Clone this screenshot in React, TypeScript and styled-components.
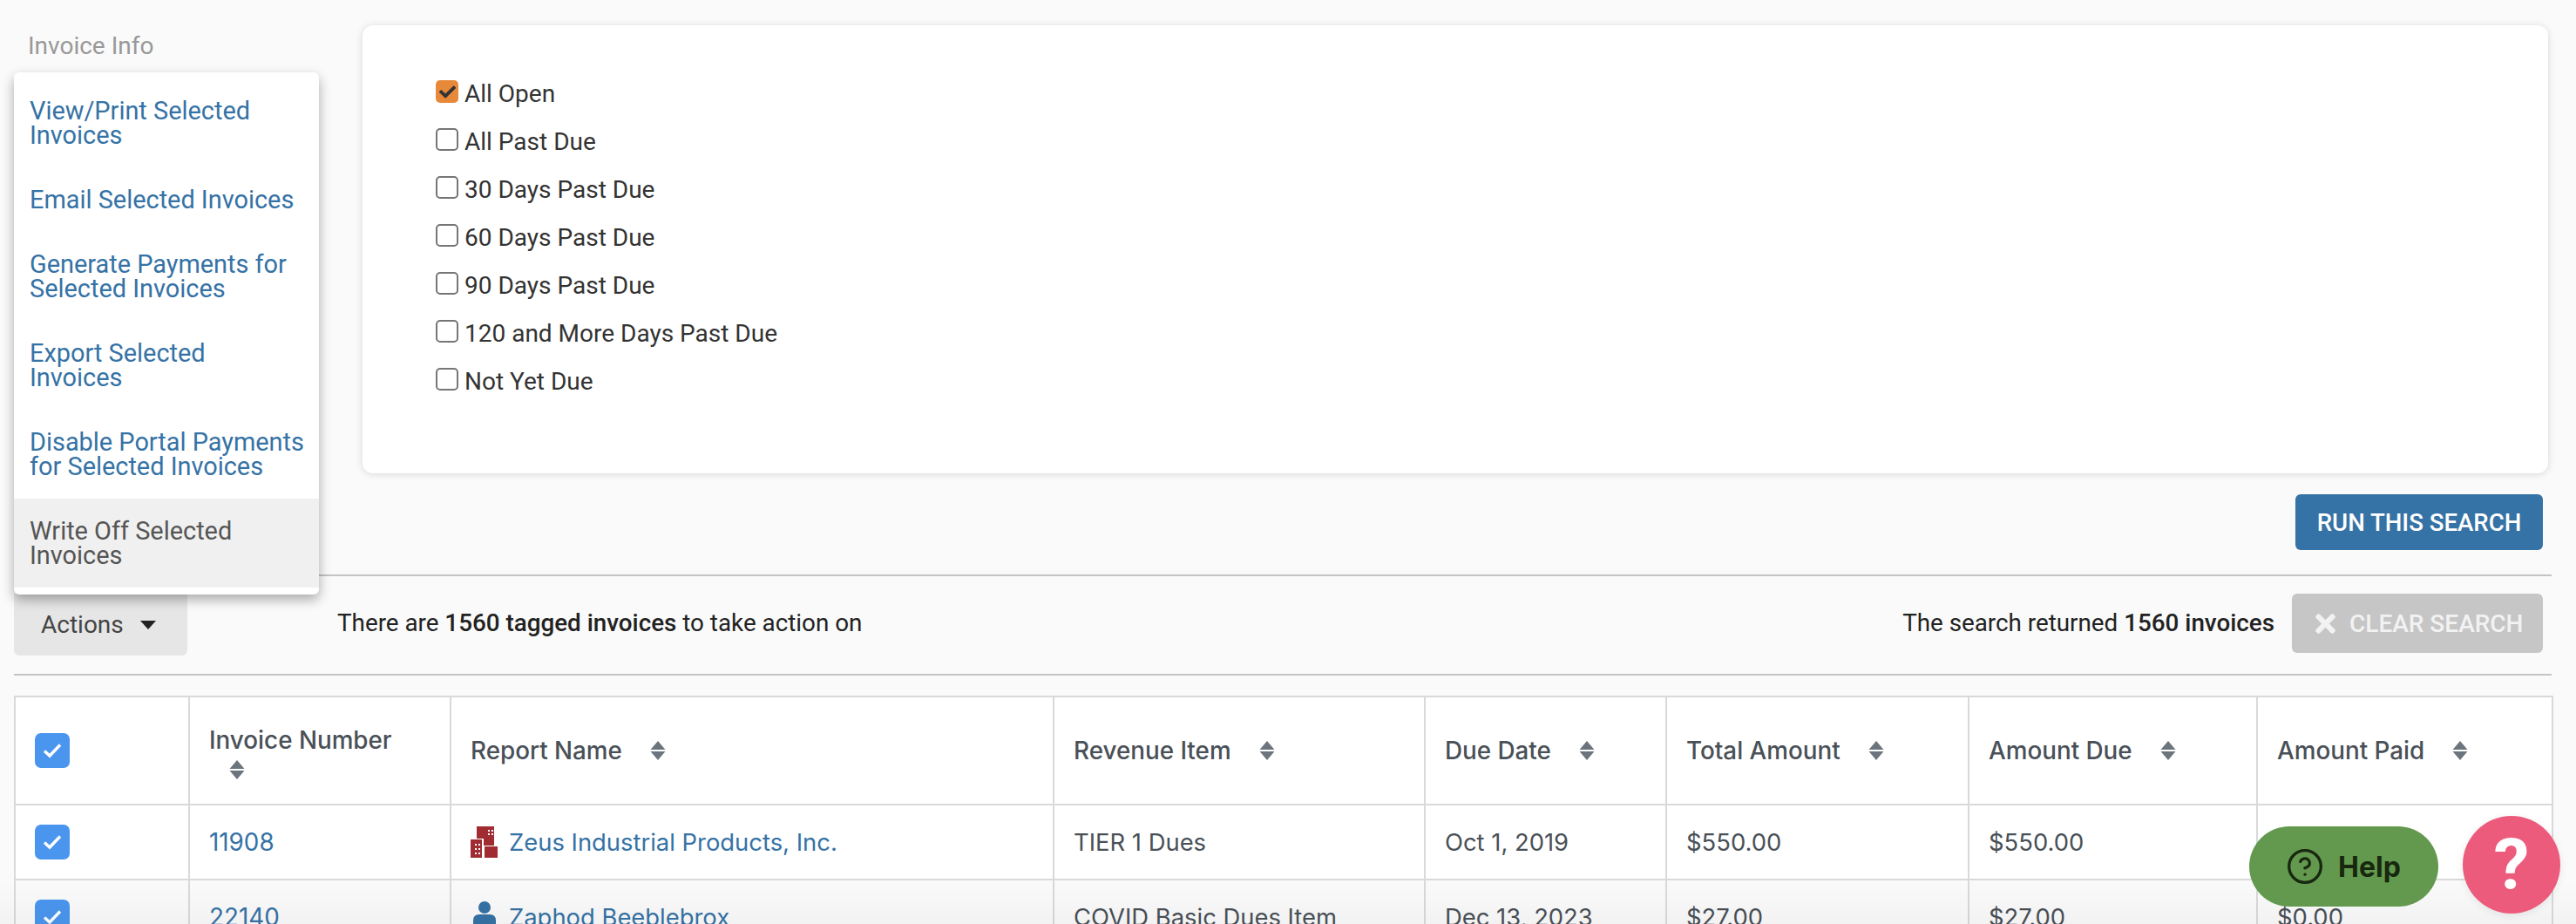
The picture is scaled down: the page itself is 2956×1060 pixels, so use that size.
import React from 'react';
import styled, { createGlobalStyle } from 'styled-components';
import { FaCheck, FaTimes } from 'react-icons/fa';
import { CircleHelp } from 'lucide-react';

const GlobalStyle = createGlobalStyle`
  html, body {
    margin: 0;
    padding: 0;
    background: #fafafa;
  }
  body {
    font-family: Roboto, "Liberation Sans", sans-serif;
    font-size: 28px;
    color: #333;
  }
  * {
    box-sizing: border-box;
  }
`;

const Page = styled.div`
  height: 1060px;
  overflow: hidden;
  padding: 29px 28px 0 16px;
  position: relative;

  &::after {
    content: '';
    position: absolute;
    left: 0;
    right: 0;
    bottom: 0;
    height: 50px;
    z-index: 4;
    pointer-events: none;
    background: linear-gradient(rgba(0, 0, 0, 0), rgba(0, 0, 0, 0.03));
  }
`;

const TopRow = styled.div`
  display: flex;
  align-items: flex-start;
`;

const Sidebar = styled.div`
  width: 400px;
  flex: none;
  position: relative;
`;

const SectionLabel = styled.div`
  padding: 8px 0 0 16px;
  color: #999;
  line-height: 32px;
`;

const Menu = styled.ul`
  position: absolute;
  top: 54px;
  left: 0;
  z-index: 5;
  width: 350px;
  margin: 0;
  padding: 7px 0 8px;
  list-style: none;
  background: #fff;
  border-radius: 6px;
  box-shadow: 0 6px 14px rgba(0, 0, 0, 0.32);
`;

const MenuItem = styled.li<{ $active?: boolean }>`
  padding: 23px 0 23px 18px;
  font-size: 28.9px;
  line-height: 28px;
  color: ${(p) => (p.$active ? '#555' : '#3572a5')};
  background: ${(p) => (p.$active ? '#f0f0f0' : 'transparent')};
`;

const FilterPanel = styled.div`
  flex: 1;
  height: 514px;
  margin-right: 4px;
  padding: 63px 84px;
  background: #fff;
  border-radius: 12px;
  box-shadow: 0 1px 8px rgba(0, 0, 0, 0.14);
`;

const FilterRow = styled.label`
  display: flex;
  align-items: flex-start;
  gap: 7px;
  height: 55px;
  line-height: 32px;
  color: #333;
`;

const FilterBox = styled.span<{ $checked?: boolean }>`
  width: 26px;
  height: 26px;
  flex: none;
  display: flex;
  align-items: center;
  justify-content: center;
  border-radius: 5px;
  color: #333;
  background: ${(p) => (p.$checked ? '#e8893a' : '#fff')};
  border: ${(p) => (p.$checked ? 'none' : '2px solid #767676')};
`;

const ButtonRow = styled.div`
  display: flex;
  justify-content: flex-end;
  padding: 24px 10px 28px 0;
`;

const RunButton = styled.button`
  width: 284px;
  height: 64px;
  border: none;
  border-radius: 6px;
  background: #3572a5;
  color: #fff;
  font: 500 27.6px Roboto, sans-serif;
`;

const ActionBar = styled.div`
  display: flex;
  align-items: flex-start;
  height: 116px;
  border-top: 2px solid #c4c4c4;
  border-bottom: 2px solid #c4c4c4;
`;

const ActionsButton = styled.div`
  width: 199px;
  height: 71px;
  margin-top: 20px;
  display: flex;
  align-items: center;
  gap: 19px;
  padding-left: 31px;
  border-radius: 0 0 6px 6px;
  background: #e6e6e6;
  color: #444;
`;

const Caret = styled.span`
  width: 0;
  height: 0;
  border-left: 9px solid transparent;
  border-right: 9px solid transparent;
  border-top: 10px solid #222;
`;

const Summary = styled.div`
  margin-top: 38px;
  line-height: 32px;
  font-size: 27.8px;
  color: #222;
  b {
    font-weight: 500;
  }
`;

const TaggedSummary = styled(Summary)`
  margin-left: 172px;
`;

const ReturnedSummary = styled(Summary)`
  margin-left: auto;
`;

const ClearButton = styled.div`
  width: 288px;
  height: 68px;
  margin: 20px 10px 0 20px;
  display: flex;
  align-items: center;
  gap: 11px;
  padding-left: 22px;
  border-radius: 6px;
  background: #c6c6c6;
  color: #f2f2f2;
  font-weight: 500;
`;

const DataTable = styled.table`
  width: 100%;
  margin-top: 23px;
  table-layout: fixed;
  border-collapse: collapse;
  font-family: Inter, Roboto, sans-serif;
  font-size: 27.4px;
  background: #fff;
`;

const HeadCell = styled.th`
  height: 124px;
  padding: 0 22px;
  text-align: left;
  font-size: 27.8px;
  font-weight: 500;
  line-height: 40px;
  color: #495057;
  border: 2px solid #d9d9d9;
`;

const Cell = styled.td`
  height: 86px;
  padding: 0 22px;
  color: #495057;
  border: 2px solid #d9d9d9;
`;

const StripedRow = styled.tr`
  background: #fafafa;
`;

const NumberLink = styled.span`
  font-size: 27.8px;
  color: #3572a5;
`;

const HeaderLabel = styled.span`
  display: inline-flex;
  align-items: center;
  flex-wrap: wrap;
  column-gap: 32px;
`;

const ReportCell = styled.span`
  display: flex;
  align-items: center;
  gap: 13px;
  color: #3572a5;
`;

const TickBox = styled.span`
  width: 40px;
  height: 40px;
  display: flex;
  align-items: center;
  justify-content: center;
  border-radius: 7px;
  background: #4a96ee;
`;

const SortGlyph = styled.svg`
  width: 18px;
  height: 22px;
  fill: #6c757d;
  flex: none;
`;

const WrappedSort = styled.span`
  display: block;
  padding: 3px 0 0 23px;
  line-height: 0;
`;

const HelpPill = styled.div`
  position: fixed;
  left: 2581px;
  top: 948px;
  width: 217px;
  height: 92px;
  z-index: 6;
  display: flex;
  align-items: center;
  gap: 16px;
  padding-left: 42px;
  border-radius: 46px;
  background: #63994e;
  color: #17280f;
  font: 700 32px Inter, sans-serif;
`;

const HelpBubble = styled.div`
  position: fixed;
  left: 2826px;
  top: 936px;
  width: 112px;
  height: 112px;
  z-index: 6;
  display: flex;
  align-items: center;
  justify-content: center;
  border-radius: 50%;
  background: #ec5a7c;
  box-shadow: 0 2px 10px rgba(0, 0, 0, 0.08);
  color: #fff;
  font: 700 82px Roboto, sans-serif;
`;

const menuItems = [
  <>View/Print Selected Invoices</>,
  <>Email Selected Invoices</>,
  <>Generate Payments for Selected Invoices</>,
  <>
    Export Selected
    <br />
    Invoices
  </>,
  <>Disable Portal Payments for Selected Invoices</>,
];

const filters = [
  'All Open',
  'All Past Due',
  '30 Days Past Due',
  '60 Days Past Due',
  '90 Days Past Due',
  '120 and More Days Past Due',
  'Not Yet Due',
];

const columns = [
  { title: '', width: 200 },
  { title: 'Invoice Number', width: 300 },
  { title: 'Report Name', width: 692 },
  { title: 'Revenue Item', width: 426 },
  { title: 'Due Date', width: 277 },
  { title: 'Total Amount', width: 347 },
  { title: 'Amount Due', width: 331 },
  { title: 'Amount Paid', width: 339 },
];

function SortIcon() {
  return (
    <SortGlyph viewBox="0 0 18 22">
      <path d="M9 0 L17.5 10 H0.5 Z" />
      <path d="M0.5 12 H17.5 L9 22 Z" />
    </SortGlyph>
  );
}

function Tick() {
  return (
    <svg width="22" height="18" viewBox="0 0 22 18" fill="none">
      <path d="M2 9.5 L8 15 L20 2.5" stroke="#fff" strokeWidth="3.4" />
    </svg>
  );
}

function BuildingIcon() {
  return (
    <svg width="31" height="36" viewBox="0 0 31 36" style={{ flex: 'none' }}>
      <path fill="#a02c32" d="M7 0 H27 V22 H15 V14 H7 Z" />
      <path fill="#a02c32" d="M0 15 H13 V36 H0 Z" />
      <path fill="#a02c32" d="M16 23 H31 V36 H16 Z" />
      <path fill="#fff" d="M20 4 h2 v2 h-2 Z M24 4 h2 v2 h-2 Z M20 8 h2 v2 h-2 Z M24 8 h2 v2 h-2 Z" />
      <path fill="#fff" d="M5 20 h2 v2 h-2 Z M9 20 h2 v2 h-2 Z M5 25 h2 v2 h-2 Z M9 25 h2 v2 h-2 Z M5 30 h2 v2 h-2 Z M9 30 h2 v2 h-2 Z" />
    </svg>
  );
}

function PersonIcon() {
  return (
    <svg width="31" height="36" viewBox="0 0 31 36" style={{ flex: 'none' }}>
      <circle cx="16" cy="7" r="7" fill="#3572a5" />
      <path fill="#3572a5" d="M3 36 L3 22 Q3 15 10 15 H22 Q29 15 29 22 L29 36 Z" />
    </svg>
  );
}

export default function App() {
  return (
    <Page>
      <GlobalStyle />
      <TopRow>
        <Sidebar>
          <SectionLabel>Invoice Info</SectionLabel>
          <Menu>
            {menuItems.map((item, i) => (
              <MenuItem key={i}>{item}</MenuItem>
            ))}
            <MenuItem $active>Write Off Selected Invoices</MenuItem>
          </Menu>
        </Sidebar>
        <FilterPanel>
          {filters.map((filter, i) => (
            <FilterRow key={filter}>
              <FilterBox $checked={i === 0}>{i === 0 && <FaCheck size={19} />}</FilterBox>
              {filter}
            </FilterRow>
          ))}
        </FilterPanel>
      </TopRow>
      <ButtonRow>
        <RunButton>RUN THIS SEARCH</RunButton>
      </ButtonRow>
      <ActionBar>
        <ActionsButton>
          Actions
          <Caret />
        </ActionsButton>
        <TaggedSummary>
          There are <b>1560 tagged invoices</b> to take action on
        </TaggedSummary>
        <ReturnedSummary>
          The search returned <b>1560 invoices</b>
        </ReturnedSummary>
        <ClearButton>
          <FaTimes size={33} />
          CLEAR SEARCH
        </ClearButton>
      </ActionBar>
      <DataTable>
        <colgroup>
          {columns.map((col) => (
            <col key={col.title} style={{ width: col.width }} />
          ))}
        </colgroup>
        <thead>
          <tr>
            <HeadCell>
              <TickBox>
                <Tick />
              </TickBox>
            </HeadCell>
            <HeadCell>
              Invoice Number
              <WrappedSort>
                <SortIcon />
              </WrappedSort>
            </HeadCell>
            {columns.slice(2).map((col) => (
              <HeadCell key={col.title}>
                <HeaderLabel>
                  {col.title}
                  <SortIcon />
                </HeaderLabel>
              </HeadCell>
            ))}
          </tr>
        </thead>
        <tbody>
          <tr>
            <Cell>
              <TickBox>
                <Tick />
              </TickBox>
            </Cell>
            <Cell>
              <NumberLink>11908</NumberLink>
            </Cell>
            <Cell>
              <ReportCell>
                <BuildingIcon />
                Zeus Industrial Products, Inc.
              </ReportCell>
            </Cell>
            <Cell>TIER 1 Dues</Cell>
            <Cell>Oct 1, 2019</Cell>
            <Cell>$550.00</Cell>
            <Cell>$550.00</Cell>
            <Cell />
          </tr>
          <StripedRow>
            <Cell>
              <TickBox>
                <Tick />
              </TickBox>
            </Cell>
            <Cell>
              <NumberLink>22140</NumberLink>
            </Cell>
            <Cell>
              <ReportCell>
                <PersonIcon />
                Zaphod Beeblebrox
              </ReportCell>
            </Cell>
            <Cell>COVID Basic Dues Item</Cell>
            <Cell>Dec 13, 2023</Cell>
            <Cell>$27.00</Cell>
            <Cell>$27.00</Cell>
            <Cell>$0.00</Cell>
          </StripedRow>
        </tbody>
      </DataTable>
      <HelpPill>
        <CircleHelp size={44} strokeWidth={1.8} />
        Help
      </HelpPill>
      <HelpBubble>?</HelpBubble>
    </Page>
  );
}
